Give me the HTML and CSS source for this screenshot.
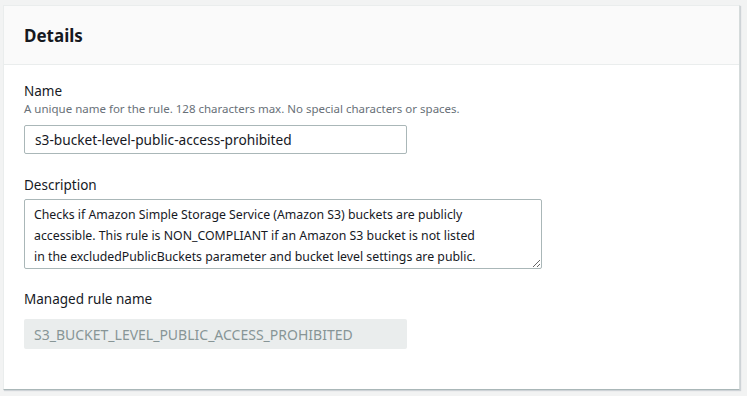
FILE: index.html
```html
<!DOCTYPE html>
<html lang="en">
<head>
    <meta charset="UTF-8">
    <title>Details</title>
    <link rel="stylesheet" href="styles.css">
</head>
<body>
    <div class="panel">
        <div class="panel-header">
            <h2>Details</h2>
        </div>
        <div class="panel-body">
            <div class="field">
                <div class="field-label">Name</div>
                <div class="field-hint">A unique name for the rule. 128 characters max. No special characters or spaces.</div>
                <input class="text-input" type="text" value="s3-bucket-level-public-access-prohibited">
            </div>
            <div class="field field-desc">
                <div class="field-label">Description</div>
                <textarea class="text-area">Checks if Amazon Simple Storage Service (Amazon S3) buckets are publicly accessible. This rule is NON_COMPLIANT if an Amazon S3 bucket is not listed in the excludedPublicBuckets parameter and bucket level settings are public.</textarea>
            </div>
            <div class="field">
                <div class="field-label">Managed rule name</div>
                <div class="readonly-box">S3_BUCKET_LEVEL_PUBLIC_ACCESS_PROHIBITED</div>
            </div>
        </div>
    </div>
</body>
</html>
```

FILE: styles.css
```css
body {
    margin: 0;
    height: 100vh;
    box-sizing: border-box;
    padding: 5px 7px 6px 3px;
    background-color: #f2f3f3;
    font-family: "Noto Sans", "Open Sans", sans-serif;
    color: #16191f;
}

.panel {
    height: 100%;
    box-sizing: border-box;
    background-color: #fff;
    border-left: 1px solid #eaeded;
    border-top: 1px solid #eaeded;
    border-right: 1px solid #d5dbdb;
    border-bottom: 1px solid #aab7b8;
    box-shadow: 1px 1px 1px rgba(0, 31, 63, 0.15);
}

.panel-header {
    background-color: #fafafa;
    border-bottom: 1px solid #eaeded;
    height: 58px;
    display: flex;
    align-items: center;
    padding-left: 20px;
}

.panel-header h2 {
    margin: 0;
    font-size: 17px;
    font-weight: 700;
}

.panel-body {
    padding: 16px 20px 0 20px;
}

.field {
    margin-bottom: 21px;
}

.field-desc {
    margin-bottom: 20px;
}

.field-label {
    font-size: 13.5px;
    line-height: 20px;
}

.field-hint {
    font-size: 11.5px;
    color: #687078;
    line-height: 15px;
    margin-bottom: 9px;
}

.text-input {
    display: block;
    width: 383px;
    height: 29px;
    box-sizing: border-box;
    border: 1px solid #aab7b8;
    border-radius: 2px;
    padding: 0 10px;
    font-family: inherit;
    font-size: 13.7px;
    color: #16191f;
    margin: 0;
}

.text-area {
    display: block;
    margin: 4px 0 0 0;
    width: 518px;
    height: 70px;
    box-sizing: border-box;
    border: 1px solid #aab7b8;
    border-radius: 2px;
    padding: 4px 54px 4px 9px;
    font-family: inherit;
    font-size: 12.3px;
    line-height: 21px;
    color: #16191f;
    resize: both;
    overflow: hidden;
}

.readonly-box {
    margin-top: 10px;
    width: 383px;
    height: 30px;
    box-sizing: border-box;
    background-color: #eaeded;
    border-radius: 2px;
    padding: 0 10px;
    display: flex;
    align-items: center;
    font-size: 14px;
    color: #879596;
}
```
